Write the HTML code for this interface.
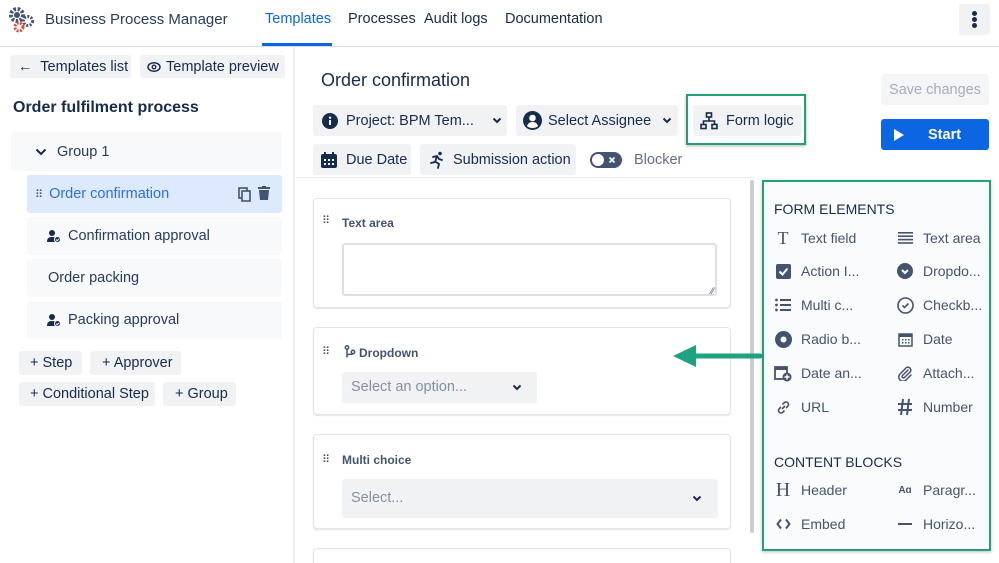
<!DOCTYPE html>
<html><head><meta charset="utf-8"><style>
*{box-sizing:border-box;margin:0;padding:0}
html{width:999px;height:563px;overflow:hidden}
body{width:999px;height:563px;overflow:hidden;background:#fff;font-family:"Liberation Sans",sans-serif;color:#172b4d;position:relative;font-size:14px}
.a{position:absolute}
.btn{position:absolute;background:#f1f2f4;border-radius:3px;display:flex;align-items:center;color:#172b4d;font-size:14.5px;white-space:nowrap}
.row{position:absolute;background:#f8f9fb;border-radius:3px;display:flex;align-items:center;font-size:14.5px;color:#283b5a}
.card{position:absolute;left:313px;width:418px;border:1px solid #e3e5e8;border-radius:4px;background:#fff;box-shadow:0 1px 1px rgba(9,30,66,.12)}
.dots{position:absolute;left:8px;font-size:11px;color:#44546f;letter-spacing:-1px}
.lbl{position:absolute;left:28px;font-size:12px;font-weight:bold;color:#44546f}
.it{position:absolute;font-size:14px;color:#44546f;display:flex;align-items:center}
.ic{width:18px;height:18px;margin-right:9px;display:flex;align-items:center;justify-content:center;color:#44546f}
</style></head><body>
<svg class="a" style="left:8px;top:6px" width="28" height="28" viewBox="0 0 28 28">
<circle cx="9" cy="9" r="6" fill="none" stroke="#44546f" stroke-width="4" stroke-dasharray="2.5 1.6"/>
<circle cx="9" cy="9" r="3" fill="#44546f"/>
<circle cx="20" cy="15" r="4.5" fill="none" stroke="#44546f" stroke-width="3" stroke-dasharray="2 1.4"/>
<circle cx="11" cy="21" r="4" fill="none" stroke="#e5493a" stroke-width="3" stroke-dasharray="2 1.3"/>
</svg>
<div class="a" style="left:45px;top:11px;font-size:15px;color:#283b5a">Business Process Manager</div>
<div class="a" style="left:265px;top:11px;font-size:14.5px;color:#0c66e4">Templates</div>
<div class="a" style="left:262px;top:43px;width:70px;height:3px;background:#0c66e4"></div>
<div class="a" style="left:348px;top:11px;font-size:14.5px">Processes</div>
<div class="a" style="left:424px;top:11px;font-size:14.5px">Audit logs</div>
<div class="a" style="left:505px;top:11px;font-size:14.5px">Documentation</div>
<div class="a" style="left:959px;top:4px;width:31px;height:31px;background:#f1f2f4;border-radius:3px"></div>
<div class="a" style="left:972px;top:11px;width:5px;height:5px;border-radius:50%;background:#172b4d;box-shadow:0 6px 0 #172b4d,0 12px 0 #172b4d"></div>
<div class="a" style="left:0;top:46px;width:999px;height:1px;background:#d8dadf"></div>
<div class="a" style="left:293px;top:47px;width:2px;height:516px;background:#eceef1"></div>
<div class="btn" style="left:10px;top:55px;width:121px;height:23px;padding-left:8px">←&nbsp; Templates list</div>
<div class="btn" style="left:140px;top:55px;width:145px;height:23px;padding-left:7px"><svg width="14" height="14" viewBox="0 0 14 14" style="margin-right:5px"><ellipse cx="7" cy="7" rx="6" ry="4.3" fill="none" stroke="#172b4d" stroke-width="1.5"/><circle cx="7" cy="7" r="1.8" fill="none" stroke="#172b4d" stroke-width="1.4"/></svg>Template preview</div>
<div class="a" style="left:13px;top:99px;font-size:16px;font-weight:bold;color:#172b4d">Order fulfilment process</div>
<div class="row" style="left:11px;top:132px;width:271px;height:39px;padding-left:24px"><svg width="12" height="8" viewBox="0 0 12 8" style="margin-right:10px"><path d="M1.5 1.5l4.5 4.5 4.5-4.5" stroke="#172b4d" stroke-width="2" fill="none"/></svg>Group 1</div>
<div class="row" style="left:27px;top:175px;width:255px;height:38px;background:#dde9fc;color:#2f6fde;padding-left:8px"><span style="font-size:11px;color:#44546f;margin-right:6px">⠿</span>Order confirmation
<svg class="a" style="left:211px;top:12px" width="13" height="15" viewBox="0 0 13 15"><rect x="1" y="1" width="8" height="10" fill="none" stroke="#44546f" stroke-width="1.6"/><rect x="4" y="4" width="8" height="10" fill="#dde9fc" stroke="#44546f" stroke-width="1.6"/></svg>
<svg class="a" style="left:231px;top:11px" width="12" height="14" viewBox="0 0 12 14"><rect x="0" y="1" width="12" height="2" fill="#44546f"/><rect x="4" y="0" width="4" height="2" fill="#44546f"/><path d="M1 4h10l-1 10H2z" fill="#44546f"/></svg></div>
<div class="row" style="left:27px;top:217px;width:255px;height:38px;padding-left:20px"><svg width="14" height="13" viewBox="0 0 14 13" style="margin-right:7px"><circle cx="5" cy="3" r="3" fill="#172b4d"/><path d="M0 12c0-4 2-5 5-5s4 1 4 2v3z" fill="#172b4d"/><circle cx="10.5" cy="9.5" r="3" fill="#172b4d" stroke="#fff" stroke-width="1"/><path d="M9 9.5l1.2 1.2 2-2" stroke="#fff" stroke-width="1" fill="none"/></svg>Confirmation approval</div>
<div class="row" style="left:27px;top:259px;width:255px;height:38px;padding-left:21px">Order packing</div>
<div class="row" style="left:27px;top:301px;width:255px;height:38px;padding-left:20px"><svg width="14" height="13" viewBox="0 0 14 13" style="margin-right:7px"><circle cx="5" cy="3" r="3" fill="#172b4d"/><path d="M0 12c0-4 2-5 5-5s4 1 4 2v3z" fill="#172b4d"/><circle cx="10.5" cy="9.5" r="3" fill="#172b4d" stroke="#fff" stroke-width="1"/><path d="M9 9.5l1.2 1.2 2-2" stroke="#fff" stroke-width="1" fill="none"/></svg>Packing approval</div>
<div class="btn" style="left:19px;top:351px;width:63px;height:24px;padding-left:11px">+ Step</div>
<div class="btn" style="left:90px;top:351px;width:91px;height:24px;padding-left:12px">+ Approver</div>
<div class="btn" style="left:19px;top:382px;width:136px;height:24px;padding-left:11px">+ Conditional Step</div>
<div class="btn" style="left:163px;top:382px;width:73px;height:24px;padding-left:12px">+ Group</div>
<div class="a" style="left:321px;top:70px;font-size:18px;color:#172b4d">Order confirmation</div>
<div class="btn" style="left:313px;top:105px;width:194px;height:31px;padding-left:9px"><svg width="16" height="16" viewBox="0 0 16 16" style="margin-right:8px"><circle cx="8" cy="8" r="8" fill="#172b4d"/><rect x="7" y="7" width="2" height="5" fill="#fff"/><circle cx="8" cy="4.7" r="1.2" fill="#fff"/></svg>Project: BPM Tem...<svg width="10" height="7" viewBox="0 0 10 7" style="margin-left:18px"><path d="M1.5 1.5l3.5 3.5 3.5-3.5" stroke="#172b4d" stroke-width="2" fill="none"/></svg></div>
<div class="btn" style="left:516px;top:105px;width:162px;height:31px;padding-left:7px"><svg width="19" height="19" viewBox="0 0 19 19" style="margin-right:6px"><circle cx="9.5" cy="9.5" r="9.5" fill="#172b4d"/><circle cx="9.5" cy="7" r="3.3" fill="#fff"/><path d="M4 15c1-3 3-4 5.5-4s4.5 1 5.5 4c-1.5 1.5-3.5 2-5.5 2s-4-.5-5.5-2z" fill="#fff"/></svg>Select Assignee<svg width="10" height="7" viewBox="0 0 10 7" style="margin-left:11px"><path d="M1.5 1.5l3.5 3.5 3.5-3.5" stroke="#172b4d" stroke-width="2" fill="none"/></svg></div>
<div class="a" style="left:686px;top:94px;width:120px;height:51px;border:2px solid #21a07c;box-shadow:0 1px 3px rgba(0,0,0,.3)"></div>
<div class="btn" style="left:693px;top:105px;width:109px;height:31px;padding-left:7px"><svg width="18" height="18" viewBox="0 0 18 18" style="margin-right:8px" fill="none" stroke="#172b4d" stroke-width="1.6"><rect x="6.5" y="1" width="5" height="4"/><rect x="1" y="12.5" width="5" height="4"/><rect x="12" y="12.5" width="5" height="4"/><path d="M9 5v4M3.5 12.5V9h11v3.5"/></svg>Form logic</div>
<div class="btn" style="left:313px;top:144px;width:98px;height:31px;padding-left:7px"><svg width="18" height="18" viewBox="0 0 18 18" style="margin-right:8px"><rect x="1" y="3" width="16" height="14" rx="2" fill="#172b4d"/><rect x="4" y="1" width="2" height="4" fill="#172b4d"/><rect x="12" y="1" width="2" height="4" fill="#172b4d"/><g fill="#fff"><rect x="4" y="8" width="2" height="2"/><rect x="8" y="8" width="2" height="2"/><rect x="12" y="8" width="2" height="2"/><rect x="4" y="12" width="2" height="2"/><rect x="8" y="12" width="2" height="2"/><rect x="12" y="12" width="2" height="2"/></g></svg>Due Date</div>
<div class="btn" style="left:420px;top:144px;width:156px;height:31px;padding-left:9px"><svg width="17" height="18" viewBox="0 0 17 18" style="margin-right:7px" fill="none" stroke="#172b4d" stroke-width="1.8" stroke-linecap="round"><circle cx="11" cy="2.5" r="1.8" fill="#172b4d" stroke="none"/><path d="M4 6l4-1 2 3 3 1M8 5l-2 6-4 1M7 11l3 2-1 4"/></svg>Submission action</div>
<div class="a" style="left:590px;top:152px;width:32px;height:16px;border-radius:8px;background:#44546f"></div>
<div class="a" style="left:592px;top:154px;width:12px;height:12px;border-radius:50%;background:#fff"></div>
<svg class="a" style="left:608px;top:156px" width="8" height="8" viewBox="0 0 8 8"><path d="M1.5 1.5l5 5M6.5 1.5l-5 5" stroke="#fff" stroke-width="1.6"/></svg>
<div class="a" style="left:634px;top:152px;font-size:14.5px;color:#626f86">Blocker</div>
<div class="btn" style="left:881px;top:74px;width:108px;height:31px;justify-content:center;color:#a5adba;background:#f4f5f7">Save changes</div>
<div class="btn" style="left:881px;top:119px;width:108px;height:31px;background:#0c66e4;color:#fff;font-weight:bold;padding-left:13px"><svg width="10" height="12" viewBox="0 0 10 12"><path d="M0 0l10 6-10 6z" fill="#fff"/></svg><span style="margin-left:24px">Start</span></div>
<div class="a" style="left:296px;top:177px;width:460px;height:1px;background:#eceef1"></div>
<div class="a" style="left:750px;top:180px;width:4px;height:353px;background:#c9ccd2;border-radius:2px"></div>
<div class="card" style="top:198px;height:110px"><div class="dots" style="top:15px">⠿</div><div class="lbl" style="top:17px">Text area</div>
<div class="a" style="left:28px;top:44px;width:375px;height:53px;border:2px solid #dcdfe4;border-radius:3px"><span class="a" style="right:1px;bottom:-2px;font-size:9px;color:#44546f">⁄⁄</span></div></div>
<div class="card" style="top:327px;height:88px"><div class="dots" style="top:17px">⠿</div>
<svg class="a" style="left:30px;top:17px" width="12" height="14" viewBox="0 0 12 14" fill="none" stroke="#44546f" stroke-width="1.5"><circle cx="3" cy="2.5" r="1.7"/><circle cx="9" cy="7" r="1.7"/><path d="M3 4.2V12.5M3 11c0-3 6-1 6-2.3"/></svg>
<div class="lbl" style="top:18px;left:45px">Dropdown</div>
<div class="a" style="left:28px;top:44px;width:195px;height:31px;background:#f1f2f4;border-radius:3px;color:#8590a2;font-size:14.5px;padding:7px 9px">Select an option...<svg class="a" style="left:170px;top:12px" width="10" height="7" viewBox="0 0 10 7"><path d="M1.5 1.5l3.5 3.5 3.5-3.5" stroke="#172b4d" stroke-width="2" fill="none"/></svg></div></div>
<div class="card" style="top:434px;height:95px"><div class="dots" style="top:18px">⠿</div><div class="lbl" style="top:18px">Multi choice</div>
<div class="a" style="left:28px;top:44px;width:376px;height:39px;background:#f1f2f4;border-radius:3px;color:#8590a2;font-size:14.5px;padding:11px 9px">Select...<svg class="a" style="left:350px;top:16px" width="10" height="7" viewBox="0 0 10 7"><path d="M1.5 1.5l3.5 3.5 3.5-3.5" stroke="#172b4d" stroke-width="2" fill="none"/></svg></div></div>
<div class="card" style="top:548px;height:15px;border-bottom:none;border-radius:4px 4px 0 0"></div>
<svg class="a" style="left:670px;top:343px" width="92" height="26" viewBox="0 0 92 26"><path d="M90 13H25" stroke="#1ea282" stroke-width="5" stroke-linecap="round"/><path d="M3 13L26 2v22z" fill="#1ea282"/></svg>
<div class="a" style="left:762px;top:180px;width:229px;height:371px;border:2px solid #21a07c;background:#fafbfc;box-shadow:0 1px 3px rgba(0,0,0,.25)"></div>
<div class="a" style="left:774px;top:201px;font-size:14px;color:#172b4d">FORM ELEMENTS</div>
<div class="it" style="left:774px;top:229px"><span class="ic" style="font-family:'Liberation Serif';font-size:18px">T</span>Text field</div>
<div class="it" style="left:896px;top:229px"><span class="ic"><svg width="15" height="12"><g fill="#44546f"><rect y="0" width="15" height="1.6"/><rect y="3.4" width="15" height="1.6"/><rect y="6.8" width="15" height="1.6"/><rect y="10.2" width="15" height="1.6"/></g></svg></span>Text area</div>
<div class="it" style="left:774px;top:262px"><span class="ic"><svg width="15" height="15"><rect width="15" height="15" rx="2" fill="#44546f"/><path d="M3.5 7.5l3 3 5-6" stroke="#fff" stroke-width="2" fill="none"/></svg></span>Action I...</div>
<div class="it" style="left:896px;top:262px"><span class="ic"><svg width="16" height="16"><circle cx="8" cy="8" r="8" fill="#44546f"/><path d="M5 7l3 3 3-3" stroke="#fff" stroke-width="2" fill="none"/></svg></span>Dropdo...</div>
<div class="it" style="left:774px;top:296px"><span class="ic"><svg width="16" height="14"><g fill="#44546f"><circle cx="1.5" cy="2" r="1.4"/><circle cx="1.5" cy="7" r="1.4"/><circle cx="1.5" cy="12" r="1.4"/><rect x="5" y="1" width="11" height="2"/><rect x="5" y="6" width="11" height="2"/><rect x="5" y="11" width="11" height="2"/></g></svg></span>Multi c...</div>
<div class="it" style="left:896px;top:296px"><span class="ic"><svg width="17" height="17"><circle cx="8.5" cy="8.5" r="7.5" fill="none" stroke="#44546f" stroke-width="1.6"/><path d="M5.5 8.5l2 2 4-4" stroke="#44546f" stroke-width="1.6" fill="none"/></svg></span>Checkb...</div>
<div class="it" style="left:774px;top:330px"><span class="ic"><svg width="17" height="17"><circle cx="8.5" cy="8.5" r="8.5" fill="#44546f"/><circle cx="8.5" cy="8.5" r="3" fill="#fff"/></svg></span>Radio b...</div>
<div class="it" style="left:896px;top:330px"><span class="ic"><svg width="15" height="15"><rect x="1" y="2" width="13" height="12" fill="none" stroke="#44546f" stroke-width="1.5"/><rect x="1" y="2" width="13" height="3" fill="#44546f"/><g fill="#44546f"><rect x="4" y="7" width="1.5" height="1.5"/><rect x="7" y="7" width="1.5" height="1.5"/><rect x="10" y="7" width="1.5" height="1.5"/><rect x="4" y="10" width="1.5" height="1.5"/><rect x="7" y="10" width="1.5" height="1.5"/><rect x="10" y="10" width="1.5" height="1.5"/></g></svg></span>Date</div>
<div class="it" style="left:774px;top:364px"><span class="ic"><svg width="18" height="18"><rect x="1" y="3" width="12" height="12" fill="none" stroke="#44546f" stroke-width="1.8"/><rect x="1" y="3" width="12" height="3" fill="#44546f"/><circle cx="13" cy="13" r="4.5" fill="#44546f"/><path d="M13 10.5v5M10.5 13h5" stroke="#fff" stroke-width="1.4"/></svg></span>Date an...</div>
<div class="it" style="left:896px;top:364px"><span class="ic"><svg width="16" height="16" viewBox="0 0 16 16" fill="none" stroke="#44546f" stroke-width="1.5" stroke-linecap="round"><path d="M11 5L5.5 10.5a1.4 1.4 0 002 2L13.5 6.5a3 3 0 00-4-4L3 9a4.2 4.2 0 006 6l5-5"/></svg></span>Attach...</div>
<div class="it" style="left:774px;top:398px"><span class="ic"><svg width="15" height="15" fill="none" stroke="#44546f" stroke-width="1.6"><path d="M6 9l3-3M5 7L3 9a2.5 2.5 0 003.5 3.5L8.5 10.5M10 8l2-2A2.5 2.5 0 008.5 2.5L6.5 4.5"/></svg></span>URL</div>
<div class="it" style="left:896px;top:398px"><span class="ic"><svg width="16" height="18" viewBox="0 0 16 18" stroke="#44546f" stroke-width="2"><path d="M6 1L4 17M12 1l-2 16M1 6h14M1 12h14"/></svg></span>Number</div>
<div class="a" style="left:774px;top:454px;font-size:14px;color:#172b4d">CONTENT BLOCKS</div>
<div class="it" style="left:774px;top:481px"><span class="ic" style="font-family:'Liberation Serif';font-size:20px">H</span>Header</div>
<div class="it" style="left:896px;top:481px"><span class="ic" style="font-size:10px;font-weight:bold">Aɑ</span>Paragr...</div>
<div class="it" style="left:774px;top:515px"><span class="ic"><svg width="15" height="12" viewBox="0 0 15 12" fill="none" stroke="#44546f" stroke-width="2"><path d="M5 1.5L1.5 6 5 10.5M10 1.5L13.5 6 10 10.5"/></svg></span>Embed</div>
<div class="it" style="left:896px;top:515px"><span class="ic"><svg width="14" height="2"><rect width="14" height="2" fill="#44546f"/></svg></span>Horizo...</div>
</body></html>
